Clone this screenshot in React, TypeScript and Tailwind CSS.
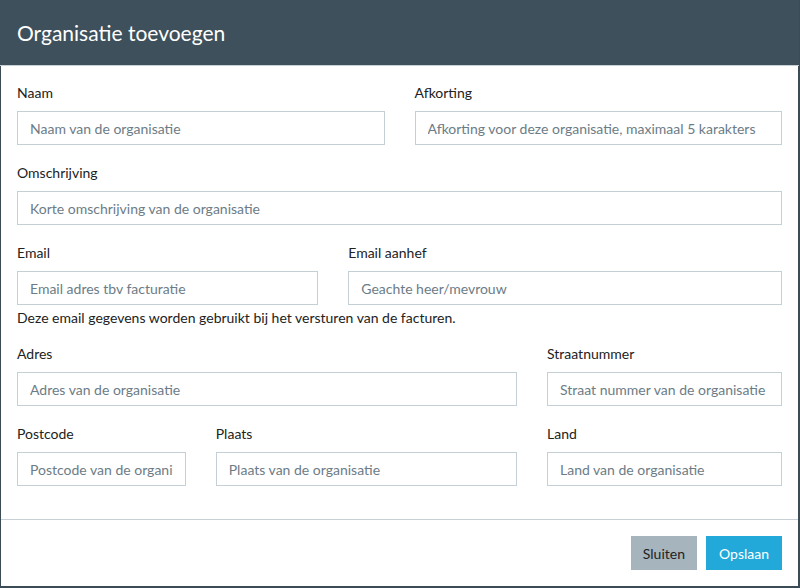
import React from "react";

type Field = {
  label: string;
  placeholder: string;
  span: string;
};

const rows: Field[][] = [
  [
    { label: "Naam", placeholder: "Naam van de organisatie", span: "col-span-6" },
    { label: "Afkorting", placeholder: "Afkorting voor deze organisatie, maximaal 5 karakters", span: "col-span-6" },
  ],
  [{ label: "Omschrijving", placeholder: "Korte omschrijving van de organisatie", span: "col-span-12" }],
];

function Input({ label, placeholder, span }: Field) {
  return (
    <div className={`${span} flex flex-col`}>
      <label className="h-[20px] text-[14px] leading-[20px] text-[#222]">{label}</label>
      <input
        placeholder={placeholder}
        className="mt-[8px] h-[34px] w-full border border-[#c4cfd6] bg-white px-[12px] text-[14px] text-[#333] outline-none placeholder:text-[#6c7c86]"
      />
    </div>
  );
}

export default function App() {
  return (
    <div className="h-[588px] w-[800px] bg-white font-['Lato',sans-serif]">
      <div className="flex h-full flex-col border-b-2 border-l border-r-2 border-[#3b4c56]">
        <div className="-mx-px flex h-[66px] shrink-0 items-center border-b border-[#c7d0d5] bg-[#3e505b] px-[17px]">
          <h1 className="text-[21px] font-normal text-white">Organisatie toevoegen</h1>
        </div>

        <div className="flex-1 px-[16px] pt-[17px]">
          {rows.map((row, i) => (
            <div key={i} className="mb-[18px] grid grid-cols-12 gap-x-[30px]">
              {row.map((f) => (
                <Input key={f.label} {...f} />
              ))}
            </div>
          ))}

          <div className="grid grid-cols-12 gap-x-[30px]">
            <Input label="Email" placeholder="Email adres tbv facturatie" span="col-span-5" />
            <Input label="Email aanhef" placeholder="Geachte heer/mevrouw" span="col-span-7" />
          </div>
          <p className="mt-[3px] text-[14px] leading-[20px] text-[#222]">
            Deze email gegevens worden gebruikt bij het versturen van de facturen.
          </p>

          <div className="mt-[16px] mb-[18px] grid grid-cols-12 gap-x-[30px]">
            <Input label="Adres" placeholder="Adres van de organisatie" span="col-span-8" />
            <Input label="Straatnummer" placeholder="Straat nummer van de organisatie" span="col-span-4" />
          </div>

          <div className="grid grid-cols-12 gap-x-[30px]">
            <Input label="Postcode" placeholder="Postcode van de organisatie" span="col-span-3" />
            <Input label="Plaats" placeholder="Plaats van de organisatie" span="col-span-5" />
            <Input label="Land" placeholder="Land van de organisatie" span="col-span-4" />
          </div>
        </div>

        <div className="flex h-[67px] shrink-0 items-center justify-end gap-[9px] border-t border-[#c7d0d5] px-[16px]">
          <button className="h-[34px] bg-[#a6b4bd] px-[12px] text-[14px] text-[#222]">Sluiten</button>
          <button className="h-[34px] bg-[#22a9da] px-[13px] text-[14px] text-white">Opslaan</button>
        </div>
      </div>
    </div>
  );
}
